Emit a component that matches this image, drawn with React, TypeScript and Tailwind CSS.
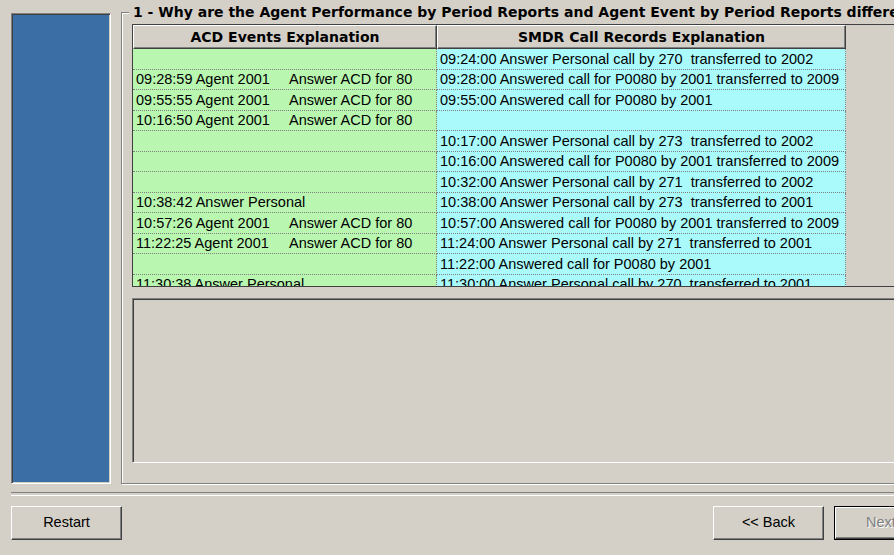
import React from "react";

const rows: [string, string, string][] = [
  ["", "", "09:24:00 Answer Personal call by 270  transferred to 2002"],
  ["09:28:59 Agent 2001", "Answer ACD for 80", "09:28:00 Answered call for P0080 by 2001 transferred to 2009"],
  ["09:55:55 Agent 2001", "Answer ACD for 80", "09:55:00 Answered call for P0080 by 2001"],
  ["10:16:50 Agent 2001", "Answer ACD for 80", ""],
  ["", "", "10:17:00 Answer Personal call by 273  transferred to 2002"],
  ["", "", "10:16:00 Answered call for P0080 by 2001 transferred to 2009"],
  ["", "", "10:32:00 Answer Personal call by 271  transferred to 2002"],
  ["10:38:42 Answer Personal", "", "10:38:00 Answer Personal call by 273  transferred to 2001"],
  ["10:57:26 Agent 2001", "Answer ACD for 80", "10:57:00 Answered call for P0080 by 2001 transferred to 2009"],
  ["11:22:25 Agent 2001", "Answer ACD for 80", "11:24:00 Answer Personal call by 271  transferred to 2001"],
  ["", "", "11:22:00 Answered call for P0080 by 2001"],
  ["11:30:38 Answer Personal", "", "11:30:00 Answer Personal call by 270  transferred to 2001"],
];

const btn =
  "h-[34px] flex items-center justify-center bg-[#d4d0c8] border border-t-white border-l-white border-r-[#404040] border-b-[#404040] shadow-[inset_-1px_-1px_0_#808080] text-[14.5px] text-black";

export default function App() {
  return (
    <div
      className="w-[894px] h-[555px] bg-[#d4d0c8] overflow-hidden flex flex-col"
      style={{ fontFamily: '"Liberation Sans", Arial, sans-serif' }}
    >
      {/* top area */}
      <div className="flex items-start pt-[12px] pl-[11px] h-[485px]">
        {/* blue panel */}
        <div className="mt-[1px] w-[100px] h-[471px] shrink-0 bg-[#3a6ea5] border border-t-[#808080] border-l-[#808080] border-b-white border-r-white shadow-[inset_1px_1px_0_#404040,inset_-1px_-1px_0_#d4d0c8]" />

        {/* group box */}
        <div className="relative ml-[10px] w-[800px] h-[472px] shrink-0 border border-r-0 border-[#808080] shadow-[inset_1px_1px_0_#fff,1px_1px_0_#fff] pt-[11px] pl-[10px] flex flex-col">
          <span
            className="absolute left-[7px] top-[-9px] px-[4px] bg-[#d4d0c8] whitespace-nowrap text-[14px] font-bold leading-[16px] text-black"
            style={{ fontFamily: '"DejaVu Sans", Verdana, sans-serif' }}
          >
            1 - Why are the Agent Performance by Period Reports and Agent Event by Period Reports different?
          </span>

          {/* table */}
          <div className="h-[263px] w-[790px] shrink-0 overflow-hidden bg-[#d4d0c8] border border-r-0 border-[#404040] flex flex-col">
            <div
              className="flex h-[24px] shrink-0 text-[14px] font-bold text-black"
              style={{ fontFamily: '"DejaVu Sans", Verdana, sans-serif' }}
            >
              <div className="w-[304px] shrink-0 flex items-center justify-center border border-t-white border-l-white border-r-[#404040] border-b-[#404040] shadow-[inset_-1px_-1px_0_#808080]">
                ACD Events Explanation
              </div>
              <div className="w-[409px] shrink-0 flex items-center justify-center border border-t-white border-l-white border-r-[#404040] border-b-[#404040] shadow-[inset_-1px_-1px_0_#808080]">
                SMDR Call Records Explanation
              </div>
            </div>
            {rows.map((r, i) => (
              <div key={i} className="flex h-[20.5px] shrink-0 text-[14.5px] text-black leading-[18px]">
                <div className="w-[304px] shrink-0 bg-[#b9f7b1] border-r border-b border-dotted border-[#808080] flex items-center pl-[3px] whitespace-pre overflow-hidden">
                  <span className="w-[153px] shrink-0">{r[0]}</span>
                  <span>{r[1]}</span>
                </div>
                <div className="w-[409px] shrink-0 bg-[#aafafc] border-r border-b border-dotted border-[#808080] flex items-center pl-[3px] whitespace-pre overflow-hidden">
                  {r[2]}
                </div>
              </div>
            ))}
          </div>

          {/* text box */}
          <div className="mt-[11px] h-[165px] w-[790px] shrink-0 bg-[#d4d0c8] border border-r-0 border-t-[#808080] border-l-[#808080] border-b-white shadow-[inset_1px_1px_0_#404040]" />
        </div>
      </div>

      {/* separator */}
      <div className="ml-[11px] mt-[7px] w-[900px] h-[4px] border-t border-b border-t-[#808080] border-b-white" />

      {/* buttons */}
      <div className="mt-[10px] w-[956px] px-[11px] flex items-center">
        <div className={`${btn} w-[111px]`}>Restart</div>
        <div className="flex-1" />
        <div className={`${btn} w-[111px]`}>&lt;&lt; Back</div>
        <div className="ml-[10px] w-[111px] h-[34px] border border-black flex">
          <div className="flex-1 flex items-center pl-[30px] bg-[#d4d0c8] border border-t-white border-l-white border-r-[#404040] border-b-[#404040] shadow-[inset_-1px_-1px_0_#808080] text-[14.5px] text-[#808080] [text-shadow:1px_1px_0_#fff]">
            Next &gt;
          </div>
        </div>
      </div>
    </div>
  );
}
